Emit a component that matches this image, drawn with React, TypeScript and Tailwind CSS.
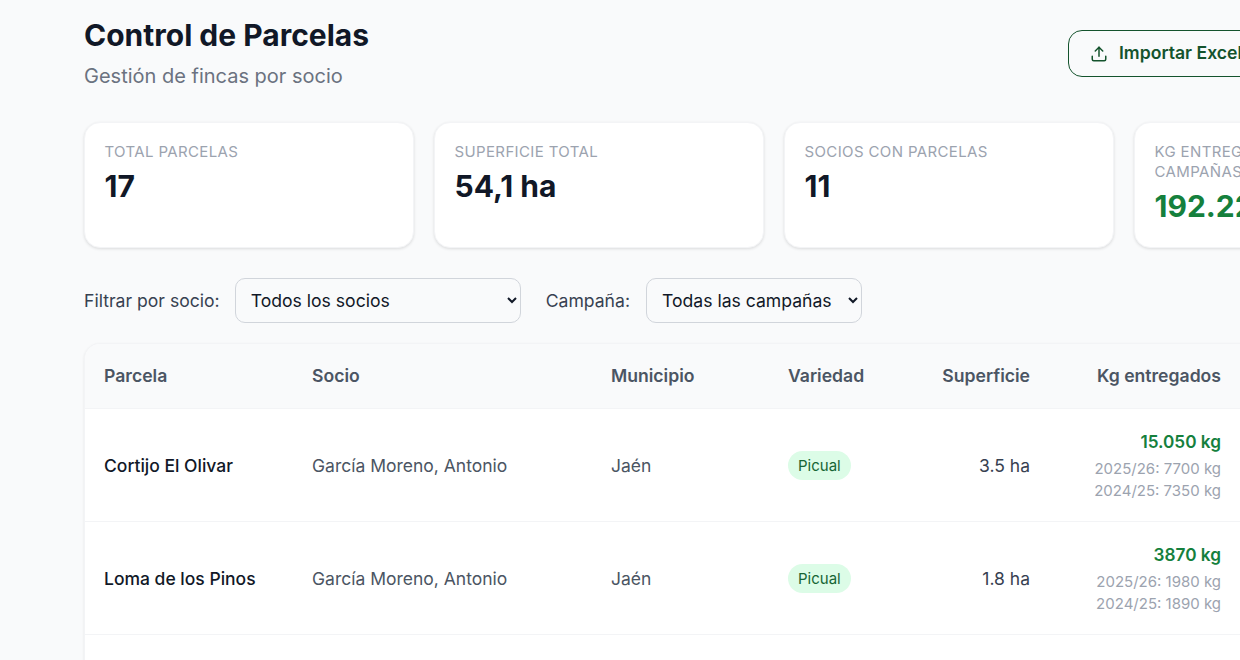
import React from 'react';
import { Upload } from 'lucide-react';

const stats = [
  { label: 'Total parcelas', value: '17', green: false },
  { label: 'Superficie total', value: '54,1 ha', green: false },
  { label: 'Socios con parcelas', value: '11', green: false },
  { label: 'Kg entregados (todas las campañas)', value: '192.220 kg', green: true },
];

const rows = [
  { parcela: 'Cortijo El Olivar', socio: 'García Moreno, Antonio', municipio: 'Jaén', variedad: 'Picual', sup: '3.5 ha', kg: '15.050 kg', a: '2025/26: 7700 kg', b: '2024/25: 7350 kg' },
  { parcela: 'Loma de los Pinos', socio: 'García Moreno, Antonio', municipio: 'Jaén', variedad: 'Picual', sup: '1.8 ha', kg: '3870 kg', a: '2025/26: 1980 kg', b: '2024/25: 1890 kg' },
  { parcela: 'Haza Grande', socio: 'López Ruiz, Carmen', municipio: 'Martos', variedad: 'Picual', sup: '4.2 ha', kg: '18.400 kg', a: '2025/26: 9400 kg', b: '2024/25: 9000 kg' },
];

export default function App() {
  return (
    <div className="h-[660px] w-[1240px] overflow-hidden bg-[#f9fafb] font-['Inter',sans-serif]">
      <div className="ml-[84px] w-[1380px] pt-[17px]">
        {/* Header */}
        <div className="flex items-start justify-between">
          <div>
            <h1 className="text-[30px] leading-[36px] font-bold text-[#111827]">Control de Parcelas</h1>
            <p className="mt-[9px] text-[20px] leading-[28px] text-[#6b7280]">Gestión de fincas por socio</p>
          </div>
          <div className="mt-[13px] flex w-[396px]">
            <button className="flex h-[47px] items-center gap-[11px] rounded-[14px] border border-[#14532d] pl-[21px] pr-[22px] text-[17.6px] font-semibold whitespace-nowrap text-[#14532d]">
              <Upload size={18} strokeWidth={2} />
              Importar Excel
            </button>
          </div>
        </div>

        {/* Stats */}
        <div className="mt-[32px] grid grid-cols-4 gap-[20px]">
          {stats.map((s) => (
            <div key={s.label} className="h-[126px] rounded-[16px] border border-[#f3f4f6] bg-white px-[19.5px] pt-[19px] shadow-[0_1px_3px_rgba(0,0,0,0.12)]">
              <div className="text-[15px] leading-[20px] tracking-[0.37px] text-[#9ca3af] uppercase">{s.label}</div>
              <div className={`mt-[6px] text-[30px] leading-[36px] font-bold ${s.green ? 'text-[#15803d]' : 'text-[#111827]'}`}>{s.value}</div>
            </div>
          ))}
        </div>

        {/* Filters */}
        <div className="mt-[30px] flex items-center text-[17.6px]">
          <label className="mt-[1px] text-[#374151]">Filtrar por socio:</label>
          <select className="ml-[15px] h-[45px] w-[286px] rounded-[10px] border border-[#d1d5db] pl-[11px] text-[#111827]">
            <option>Todos los socios</option>
          </select>
          <label className="mt-[1px] ml-[25px] text-[#374151]">Campaña:</label>
          <select className="ml-[16px] h-[45px] w-[216px] rounded-[10px] border border-[#d1d5db] pl-[11px] text-[#111827]">
            <option>Todas las campañas</option>
          </select>
        </div>

        {/* Table */}
        <div className="mt-[20px] overflow-hidden rounded-[16px] border border-[#f3f4f6] bg-white shadow-[0_1px_3px_rgba(0,0,0,0.08)]">
          <table className="w-full table-fixed border-collapse">
            <colgroup>
              <col className="w-[207px]" />
              <col className="w-[299px]" />
              <col className="w-[177px]" />
              <col className="w-[154px]" />
              <col className="w-[128px]" />
              <col className="w-[191px]" />
              <col />
            </colgroup>
            <thead>
              <tr className="border-b border-[#f3f4f6] bg-[#f9fafb] text-left text-[17.6px] text-[#4b5563]">
                <th className="py-[19px] pr-[20px] pl-[19px] font-semibold">Parcela</th>
                <th className="px-[20px] py-[19px] font-semibold">Socio</th>
                <th className="px-[20px] py-[19px] font-semibold">Municipio</th>
                <th className="px-[20px] py-[19px] font-semibold">Variedad</th>
                <th className="px-[20px] py-[19px] text-right font-semibold">Superficie</th>
                <th className="px-[20px] py-[19px] text-right font-semibold whitespace-nowrap">Kg entregados</th>
                <th className="px-[20px] py-[19px] font-semibold">Acciones</th>
              </tr>
            </thead>
            <tbody>
              {rows.map((r) => (
                <tr key={r.parcela} className="border-b border-[#f3f4f6] text-[17.5px]">
                  <td className="pt-[1px] pr-[20px] pl-[19px] font-medium text-[#111827]">{r.parcela}</td>
                  <td className="px-[20px] pt-[1px] text-[#4b5563]">{r.socio}</td>
                  <td className="px-[20px] pt-[1px] text-[#4b5563]">{r.municipio}</td>
                  <td className="px-[20px] pt-[1px]">
                    <span className="inline-block rounded-full bg-[#dcfce7] px-[10px] py-[4.5px] text-[15px] leading-[20px] text-[#166534]">{r.variedad}</span>
                  </td>
                  <td className="px-[20px] pt-[1px] text-right text-[#374151]">{r.sup}</td>
                  <td className="px-[20px] pt-[19.5px] pb-[18.5px] text-right whitespace-nowrap">
                    <div className="text-[17.2px] leading-[26.4px] font-semibold text-[#15803d]">{r.kg}</div>
                    <div className="mt-[2.5px] text-[15px] leading-[22.5px] text-[#9ca3af]">{r.a}</div>
                    <div className="text-[15px] leading-[22.5px] text-[#9ca3af]">{r.b}</div>
                  </td>
                  <td className="px-[20px]" />
                </tr>
              ))}
            </tbody>
          </table>
        </div>
      </div>
    </div>
  );
}
